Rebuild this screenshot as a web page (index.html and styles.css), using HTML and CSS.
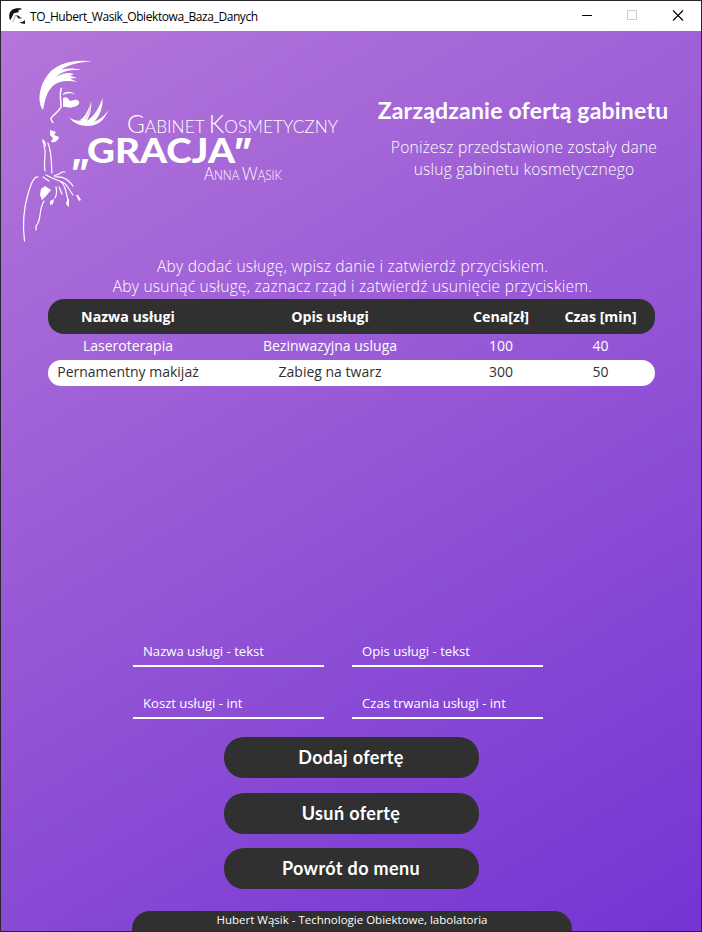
FILE: index.html
```html
<!DOCTYPE html>
<html lang="pl">
<head>
<meta charset="utf-8">
<title>TO_Hubert_Wasik_Obiektowa_Baza_Danych</title>
<link rel="stylesheet" href="styles.css">
</head>
<body>
<div class="window">
  <header class="titlebar">
    <svg class="app-icon" width="17" height="17" viewBox="0 0 17 17"><path d="M.5 11C-1 3 4-.5 12 .5L13 1 9 2.500 10 4 6 5 4.500 5.500 3 9 1.500 12Z" fill="#111"/><path d="M6.500 7L5.500 10 3.500 14" stroke="#aaa" stroke-width="1" fill="none"/><path d="M7 7l3 1 2 2-3 0zM10 14.500l3-.5 3-2v4l-3-.5z" fill="#222"/><path d="M9 10.500l4-.5" stroke="#888"/></svg>
    <span class="app-title">TO_Hubert_Wasik_Obiektowa_Baza_Danych</span>
    <svg class="controls" width="135" height="30" viewBox="0 0 135 30" fill="none" shape-rendering="crispEdges"><path d="M16 14.500h10" stroke="#000"/><rect x="61.500" y="9.500" width="9" height="9" stroke="#ccc"/><path d="M107 9.500l10 10M117 9.500l-10 10" stroke="#000" stroke-width="1.100" shape-rendering="auto"/></svg>
  </header>
  <main class="content">
    <section class="hero">
      <svg class="logo" width="330" height="200" viewBox="15 50 330 200" fill="#fff">
        <path d="M43 110C36 101 40 82 51 71C61 62 77 59 92 61.500C79 62 68 65 61 69.500C68 68 75 68 81 70C70 69.500 62 71 56 77C63 73 68 72 74 74L70 75.500 77 78 70 78.500 77 82C67 80 57 81 52 87C46 93 45 101 43 110Z"/>
        <path d="M63 94C66 91 72 91 75 94.500C71 92.500 67 93 63 95ZM63 98C66 96 68 98 70 101L74 100C78 99 80 102 79 104C77 106 75 107 73 107C70 109 66 106 63 107Z"/>
        <path d="M61.500 88C59 94 61 99 61 107C58 113 51 116 51 119L53 123" fill="none" stroke="#fff" stroke-width="1.500"/>
        <path d="M69 117C75 122 82 121 86 119C89 113 90 108 91 101C92 108 90 114 87 121C95 115 99 108 102.500 98C103 109 99 117 94 122C101 119 105 115 108.500 110C104 121 97 126 88 126C80 126 73 123 69 117ZM80 120C85 117 88 111 90 104C89 112 87 117 84 121Z"/>
        <path d="M50 130L56 132 54 135 59 137C58 141 55 143 51 142L53 138 50 135ZM42 139C46 141 46 144 46 147L43 144Z"/>
        <g fill="none" stroke="#fff" stroke-width="1.200" stroke-linecap="round">
          <path d="M44 146C47 154 43 161 45 171M48 143C52 153 51 162 52 173M24.500 241C22 221 25 204 28 194C32 180 35 176 38 177M43 177L49 181M46 175L52 178C58 181 62 180 65 188L68 200M54 176L59 174 62 172H65M55 177C65 176 69 181 73 186M59 181C66 182 68 188 73 195M56 187C57 191 57 194 55 198M59 187L62 194M44 201C38 211 42 220 36 226V230"/>
        </g>
        <path d="M41 189L45 186 51 190 47 195 42 200 40 195ZM50 201L54 199 53 204 50 205ZM67 200L69 199V207L66 204ZM76 195L78 195 81 200 79 201Z"/>
        <text class="logo-thin" x="127" y="132.500" textLength="211" lengthAdjust="spacingAndGlyphs"><tspan font-size="26">G</tspan><tspan font-size="18.500">ABINET </tspan><tspan font-size="26">K</tspan><tspan font-size="18.500">OSMETYCZNY</tspan></text>
        <text class="logo-quote" x="71" y="163">„</text>
        <text class="logo-bold" x="87" y="163" textLength="148" lengthAdjust="spacingAndGlyphs">GRACJA</text>
        <text class="logo-quote" x="233" y="163">”</text>
        <text class="logo-thin" x="204" y="180" textLength="78" lengthAdjust="spacingAndGlyphs"><tspan font-size="17">A</tspan><tspan font-size="13">NNA </tspan><tspan font-size="17">W</tspan><tspan font-size="13">ĄSIK</tspan></text>
      </svg>
      <div class="intro">
        <h1>Zarządzanie ofertą gabinetu</h1>
        <p>Poniżesz przedstawione zostały dane<br>uslug gabinetu kosmetycznego</p>
      </div>
    </section>
    <p class="hint">Aby dodać usługę, wpisz danie i zatwierdź przyciskiem.<br>Aby usunąć usługę, zaznacz rząd i zatwierdź usunięcie przyciskiem.</p>
    <section class="table">
      <div class="row head"><span>Nazwa usługi</span><span>Opis usługi</span><span>Cena[zł]</span><span>Czas [min]</span></div>
      <div class="row"><span>Laseroterapia</span><span>Bezinwazyjna usluga</span><span>100</span><span>40</span></div>
      <div class="row selected"><span>Pernamentny makijaż</span><span>Zabieg na twarz</span><span>300</span><span>50</span></div>
    </section>
    <form class="fields">
      <label>Nazwa usługi - tekst</label><label>Opis usługi - tekst</label>
      <label>Koszt usługi - int</label><label>Czas trwania usługi - int</label>
    </form>
    <div class="actions"><button type="button">Dodaj ofertę</button><button type="button">Usuń ofertę</button><button type="button">Powrót do menu</button></div>
    <footer>Hubert Wąsik - Technologie Obiektowe, labolatoria</footer>
  </main>
</div>
</body>
</html>
```
FILE: styles.css
```css
* { box-sizing: border-box; }
body { margin: 0; font-family: "Open Sans", "Noto Sans", sans-serif; }
.window { width: 702px; height: 932px; border: 1px solid #29262e; display: flex; flex-direction: column; overflow: hidden; }
.titlebar { height: 30px; flex: none; background: #fff; display: flex; align-items: center; padding-left: 8px; }
.app-title { font-size: 12px; margin-left: 4px; letter-spacing: -.42px; color: #000; }
.controls { margin-left: auto; }
.content { flex: 1; background: linear-gradient(149deg, #b476d9, #7434d3); color: #fff; display: flex; flex-direction: column; align-items: center; }
.hero { width: 100%; height: 225px; display: flex; padding: 19px 0 0 14px; }
.logo { flex: none; }
.logo-thin { font-family: Lato, sans-serif; font-weight: 300; }
.logo-bold { font-family: Lato, sans-serif; font-weight: 900; font-size: 35px; }
.logo-quote { font-family: Inter, sans-serif; font-weight: 800; font-size: 34px; }
.intro { flex: 1; text-align: center; padding: 42px 0 0; white-space: nowrap; }
h1 { font-family: Lato, sans-serif; font-size: 23px; letter-spacing: .2px; line-height: 36px; margin: 0; font-weight: 700; }
.intro p { font-size: 15.6px; letter-spacing: .2px; line-height: 22px; margin: 8px 0 0 2px; font-weight: 300; }
.hint { margin: 0 0 0 3px; font-size: 15.6px; letter-spacing: .22px; line-height: 20px; text-align: center; font-weight: 300; height: 43px; }
.table { width: 607px; height: 87px; }
.row { display: grid; grid-template-columns: 161px 243px 99px 100px; height: 26px; padding-bottom: 3px; align-items: center; text-align: center; font-size: 14px; border-radius: 13px; }
.head { height: 35px; padding: 0; border-radius: 16px; background: #303030; font-size: 14.2px; font-weight: 700; }
.selected { background: #fff; color: #303030; }
.fields { display: grid; grid-template-columns: 191px 191px; column-gap: 28px; row-gap: 22px; margin: 251px 26px 0 0; }
.fields label { height: 30px; border-bottom: 2px solid #fff; padding: 5px 10px; font-size: 13.1px; }
.actions { display: flex; flex-direction: column; gap: 14.6px; margin-top: 18px; }
button { width: 255px; height: 41px; border: 0; border-radius: 20px; padding: 0 0 1px; background: #303030; color: #fff; font: 700 18px Lato, sans-serif; letter-spacing: .37px; }
footer { margin-top: auto; margin-left: 2px; width: 440px; height: 20px; border-radius: 18px 18px 0 0; background: #303030; text-align: center; font-size: 11.5px; line-height: 17px; }
```
